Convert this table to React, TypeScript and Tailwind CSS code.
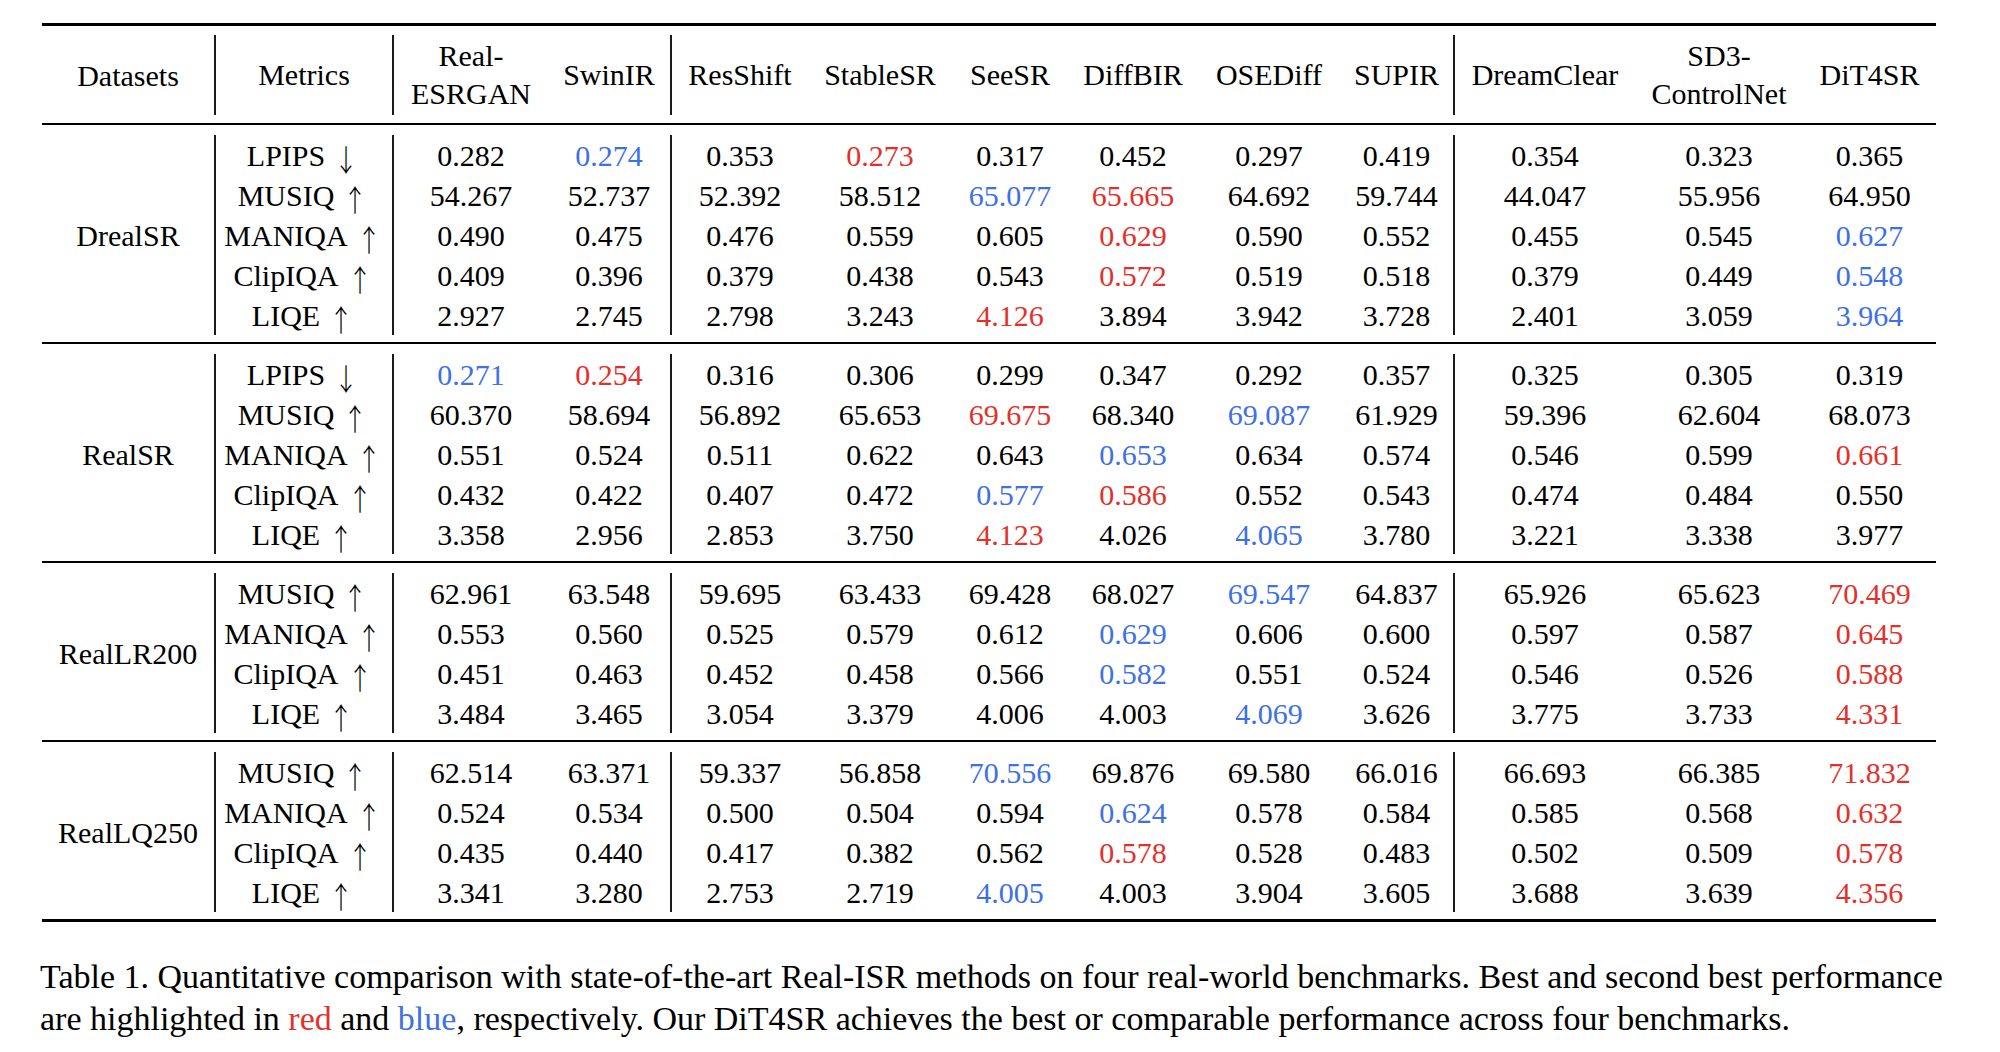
type Tone = "k" | "r" | "b";
type Cell = [string, Tone];

const serif = { fontFamily: "'Liberation Serif', 'Times New Roman', serif" };
const arrowFont = { fontFamily: "'Noto Sans CJK JP', 'DejaVu Sans', sans-serif" };

// widths of the 12 columns after "Datasets"
const colWidths = [
  "w-[178px]", "w-[154px]", "w-[124px]", "w-[136px]", "w-[144px]", "w-[116px]",
  "w-[130px]", "w-[142px]", "w-[115px]", "w-[180px]", "w-[168px]", "w-[133px]",
];
// vertical rule after Metrics, SwinIR and SUPIR
const ruled = [0, 2, 8];

const headers = [
  ["Metrics"], ["Real-", "ESRGAN"], ["SwinIR"], ["ResShift"], ["StableSR"], ["SeeSR"],
  ["DiffBIR"], ["OSEDiff"], ["SUPIR"], ["DreamClear"], ["SD3-", "ControlNet"], ["DiT4SR"],
];

function parse(s: string): Cell[] {
  return s.split(" ").map((v) => {
    const last = v[v.length - 1];
    if (last === "r" || last === "b") return [v.slice(0, -1), last];
    return [v, "k"];
  });
}

const sections: { name: string; rows: { metric: string; up: boolean; cells: Cell[] }[] }[] = [
  {
    name: "DrealSR",
    rows: [
      { metric: "LPIPS", up: false, cells: parse("0.282 0.274b 0.353 0.273r 0.317 0.452 0.297 0.419 0.354 0.323 0.365") },
      { metric: "MUSIQ", up: true, cells: parse("54.267 52.737 52.392 58.512 65.077b 65.665r 64.692 59.744 44.047 55.956 64.950") },
      { metric: "MANIQA", up: true, cells: parse("0.490 0.475 0.476 0.559 0.605 0.629r 0.590 0.552 0.455 0.545 0.627b") },
      { metric: "ClipIQA", up: true, cells: parse("0.409 0.396 0.379 0.438 0.543 0.572r 0.519 0.518 0.379 0.449 0.548b") },
      { metric: "LIQE", up: true, cells: parse("2.927 2.745 2.798 3.243 4.126r 3.894 3.942 3.728 2.401 3.059 3.964b") },
    ],
  },
  {
    name: "RealSR",
    rows: [
      { metric: "LPIPS", up: false, cells: parse("0.271b 0.254r 0.316 0.306 0.299 0.347 0.292 0.357 0.325 0.305 0.319") },
      { metric: "MUSIQ", up: true, cells: parse("60.370 58.694 56.892 65.653 69.675r 68.340 69.087b 61.929 59.396 62.604 68.073") },
      { metric: "MANIQA", up: true, cells: parse("0.551 0.524 0.511 0.622 0.643 0.653b 0.634 0.574 0.546 0.599 0.661r") },
      { metric: "ClipIQA", up: true, cells: parse("0.432 0.422 0.407 0.472 0.577b 0.586r 0.552 0.543 0.474 0.484 0.550") },
      { metric: "LIQE", up: true, cells: parse("3.358 2.956 2.853 3.750 4.123r 4.026 4.065b 3.780 3.221 3.338 3.977") },
    ],
  },
  {
    name: "RealLR200",
    rows: [
      { metric: "MUSIQ", up: true, cells: parse("62.961 63.548 59.695 63.433 69.428 68.027 69.547b 64.837 65.926 65.623 70.469r") },
      { metric: "MANIQA", up: true, cells: parse("0.553 0.560 0.525 0.579 0.612 0.629b 0.606 0.600 0.597 0.587 0.645r") },
      { metric: "ClipIQA", up: true, cells: parse("0.451 0.463 0.452 0.458 0.566 0.582b 0.551 0.524 0.546 0.526 0.588r") },
      { metric: "LIQE", up: true, cells: parse("3.484 3.465 3.054 3.379 4.006 4.003 4.069b 3.626 3.775 3.733 4.331r") },
    ],
  },
  {
    name: "RealLQ250",
    rows: [
      { metric: "MUSIQ", up: true, cells: parse("62.514 63.371 59.337 56.858 70.556b 69.876 69.580 66.016 66.693 66.385 71.832r") },
      { metric: "MANIQA", up: true, cells: parse("0.524 0.534 0.500 0.504 0.594 0.624b 0.578 0.584 0.585 0.568 0.632r") },
      { metric: "ClipIQA", up: true, cells: parse("0.435 0.440 0.417 0.382 0.562 0.578r 0.528 0.483 0.502 0.509 0.578r") },
      { metric: "LIQE", up: true, cells: parse("3.341 3.280 2.753 2.719 4.005b 4.003 3.904 3.605 3.688 3.639 4.356r") },
    ],
  },
];

const toneClass: Record<Tone, string> = {
  k: "text-black",
  r: "text-[#e3312a]",
  b: "text-[#3e70e6]",
};

function cellClass(i: number) {
  return `${colWidths[i]} shrink-0 flex flex-col items-center justify-center ${
    ruled.includes(i) ? "border-r-2 border-[#1a1a1a]" : ""
  }`;
}

export default function App() {
  return (
    <div className="w-[2000px] h-[1052px] bg-white text-black pl-[42px] pt-[23px]" style={serif}>
      <div className="w-[1894px] text-[30px]">
        {/* header */}
        <div className="border-t-[3px] border-b-2 border-black pt-[9px] pb-[8px]">
          <div className="flex h-[80px]">
            <div className="w-[174px] shrink-0 flex items-center justify-center border-r-2 border-[#1a1a1a]">
              Datasets
            </div>
            {headers.map((h, i) => (
              <div key={i} className={`${cellClass(i)} leading-[38px]`}>
                {h.map((line) => (
                  <span key={line}>{line}</span>
                ))}
              </div>
            ))}
          </div>
        </div>

        {sections.map((sec, si) => (
          <div
            key={sec.name}
            className={`pt-[10px] pb-[7px] border-black ${
              si === sections.length - 1 ? "border-b-[3px]" : "border-b-2"
            }`}
          >
            <div className="flex">
              <div className="w-[174px] shrink-0 flex items-center justify-center border-r-2 border-[#1a1a1a]">
                {sec.name}
              </div>
              <div className="flex flex-col">
                {sec.rows.map((row) => (
                  <div key={row.metric} className="flex h-[40px]">
                    <div className={cellClass(0)}>
                      <span className="flex items-center">
                        {row.metric}
                        <span
                          className="ml-[6px] text-[30px] font-light leading-none translate-y-[3px] scale-x-[0.8]"
                          style={arrowFont}
                        >
                          {row.up ? "↑" : "↓"}
                        </span>
                      </span>
                    </div>
                    {row.cells.map(([v, t], ci) => (
                      <div key={ci} className={`${cellClass(ci + 1)} ${toneClass[t]}`}>
                        {v}
                      </div>
                    ))}
                  </div>
                ))}
              </div>
            </div>
          </div>
        ))}
      </div>

      {/* caption */}
      <div className="w-[1900px] -ml-[2px] mt-[34px] text-[34px] leading-[42px]">
        <p className="text-justify [text-align-last:justify] whitespace-nowrap">
          Table 1. Quantitative comparison with state-of-the-art Real-ISR methods on four real-world benchmarks. Best and second best performance
        </p>
        <p>
          are highlighted in <span className="text-[#e3312a]">red</span> and{" "}
          <span className="text-[#3e70e6]">blue</span>, respectively. Our DiT4SR achieves the best or comparable
          performance across four benchmarks.
        </p>
      </div>
    </div>
  );
}
